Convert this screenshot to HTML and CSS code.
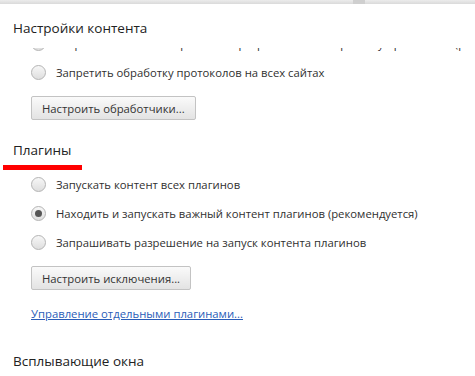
FILE: index.html
```html
<!DOCTYPE html>
<html>
  <head>
    <meta charset="UTF-8" />
    <meta name="viewport" content="width=device-width, initial-scale=1.0" />
    <title>Настройки контента</title>
    <link rel="stylesheet" href="styles.css">
  </head>
  <body>
    <div class="topbar"><span class="tab-notch"></span></div>
    <div class="header">
      <h1 class="page-title">Настройки контента</h1>
    </div>
    <div class="content">
      <div class="scroll">
        <div class="section">
          <label class="radio-row">
            <span class="radio"></span>
            <span class="radio-text">Разрешить сайтам запрашивать разрешение на обработку протоколов (рекомендуется)</span>
          </label>
          <label class="radio-row">
            <span class="radio"></span>
            <span class="radio-text">Запретить обработку протоколов на всех сайтах</span>
          </label>
          <button class="btn">Настроить обработчики...</button>
        </div>

        <div class="section section-plugins">
          <h2 class="section-title">Плагины</h2>
          <div class="marker"></div>
          <label class="radio-row">
            <span class="radio"></span>
            <span class="radio-text">Запускать контент всех плагинов</span>
          </label>
          <label class="radio-row">
            <span class="radio checked"></span>
            <span class="radio-text">Находить и запускать важный контент плагинов (рекомендуется)</span>
          </label>
          <label class="radio-row">
            <span class="radio"></span>
            <span class="radio-text">Запрашивать разрешение на запуск контента плагинов</span>
          </label>
          <button class="btn">Настроить исключения...</button>
          <a href="#" class="link">Управление отдельными плагинами...</a>
        </div>

        <div class="section section-popups">
          <h2 class="section-title">Всплывающие окна</h2>
        </div>
      </div>
    </div>
  </body>
</html>
```

FILE: styles.css
```css
body {
  font-family: "Open Sans", "Noto Sans", sans-serif;
  margin: 0;
  background: #fff;
  color: #303030;
  overflow: hidden;
}

.topbar {
  height: 4px;
  background: linear-gradient(#ececec, #dadada);
  position: relative;
}

.tab-notch {
  position: absolute;
  left: 353px;
  top: 0;
  width: 12px;
  height: 4px;
  background: #cfcfcf;
}

.header {
  height: 44px;
  padding-left: 13px;
  background: #fff;
}

.page-title {
  margin: 0;
  padding-top: 14px;
  font-size: 13.5px;
  font-weight: normal;
  line-height: 20px;
  color: #222;
}

.content {
  display: flow-root;
  height: 328px;
  overflow: hidden;
}

.scroll {
  margin-top: -19px;
}

.section {
  padding-left: 31px;
}

.section-plugins {
  padding-top: 20px;
}

.section-title {
  margin: 0 0 0 -18px;
  font-size: 13.5px;
  font-weight: normal;
  line-height: 20px;
  color: #222;
}

.marker {
  width: 79px;
  height: 5px;
  margin: 5px 0 0 -28px;
  background: #f00;
}

.radio-row {
  display: flex;
  align-items: center;
  height: 29px;
  gap: 10px;
  font-size: 11.3px;
  white-space: nowrap;
}

.radio {
  flex: none;
  width: 13px;
  height: 13px;
  border: 1px solid #b4b4b4;
  border-radius: 50%;
  background: linear-gradient(#f7f7f7, #dedede);
  position: relative;
}

.radio.checked::after {
  content: "";
  position: absolute;
  left: 3px;
  top: 3px;
  width: 7px;
  height: 7px;
  border-radius: 50%;
  background: #555;
}

.btn {
  display: block;
  margin-top: 9px;
  height: 24px;
  padding: 0 10px;
  font-family: inherit;
  font-size: 11.3px;
  color: #333;
  background: linear-gradient(#fafafa, #e3e3e3);
  border: 1px solid #c3c3c3;
  border-radius: 2px;
}

.link {
  display: inline-block;
  margin-top: 16px;
  font-size: 11.3px;
  color: #2a5db8;
  text-decoration: underline;
}

.section-popups {
  padding-top: 28px;
}
```
